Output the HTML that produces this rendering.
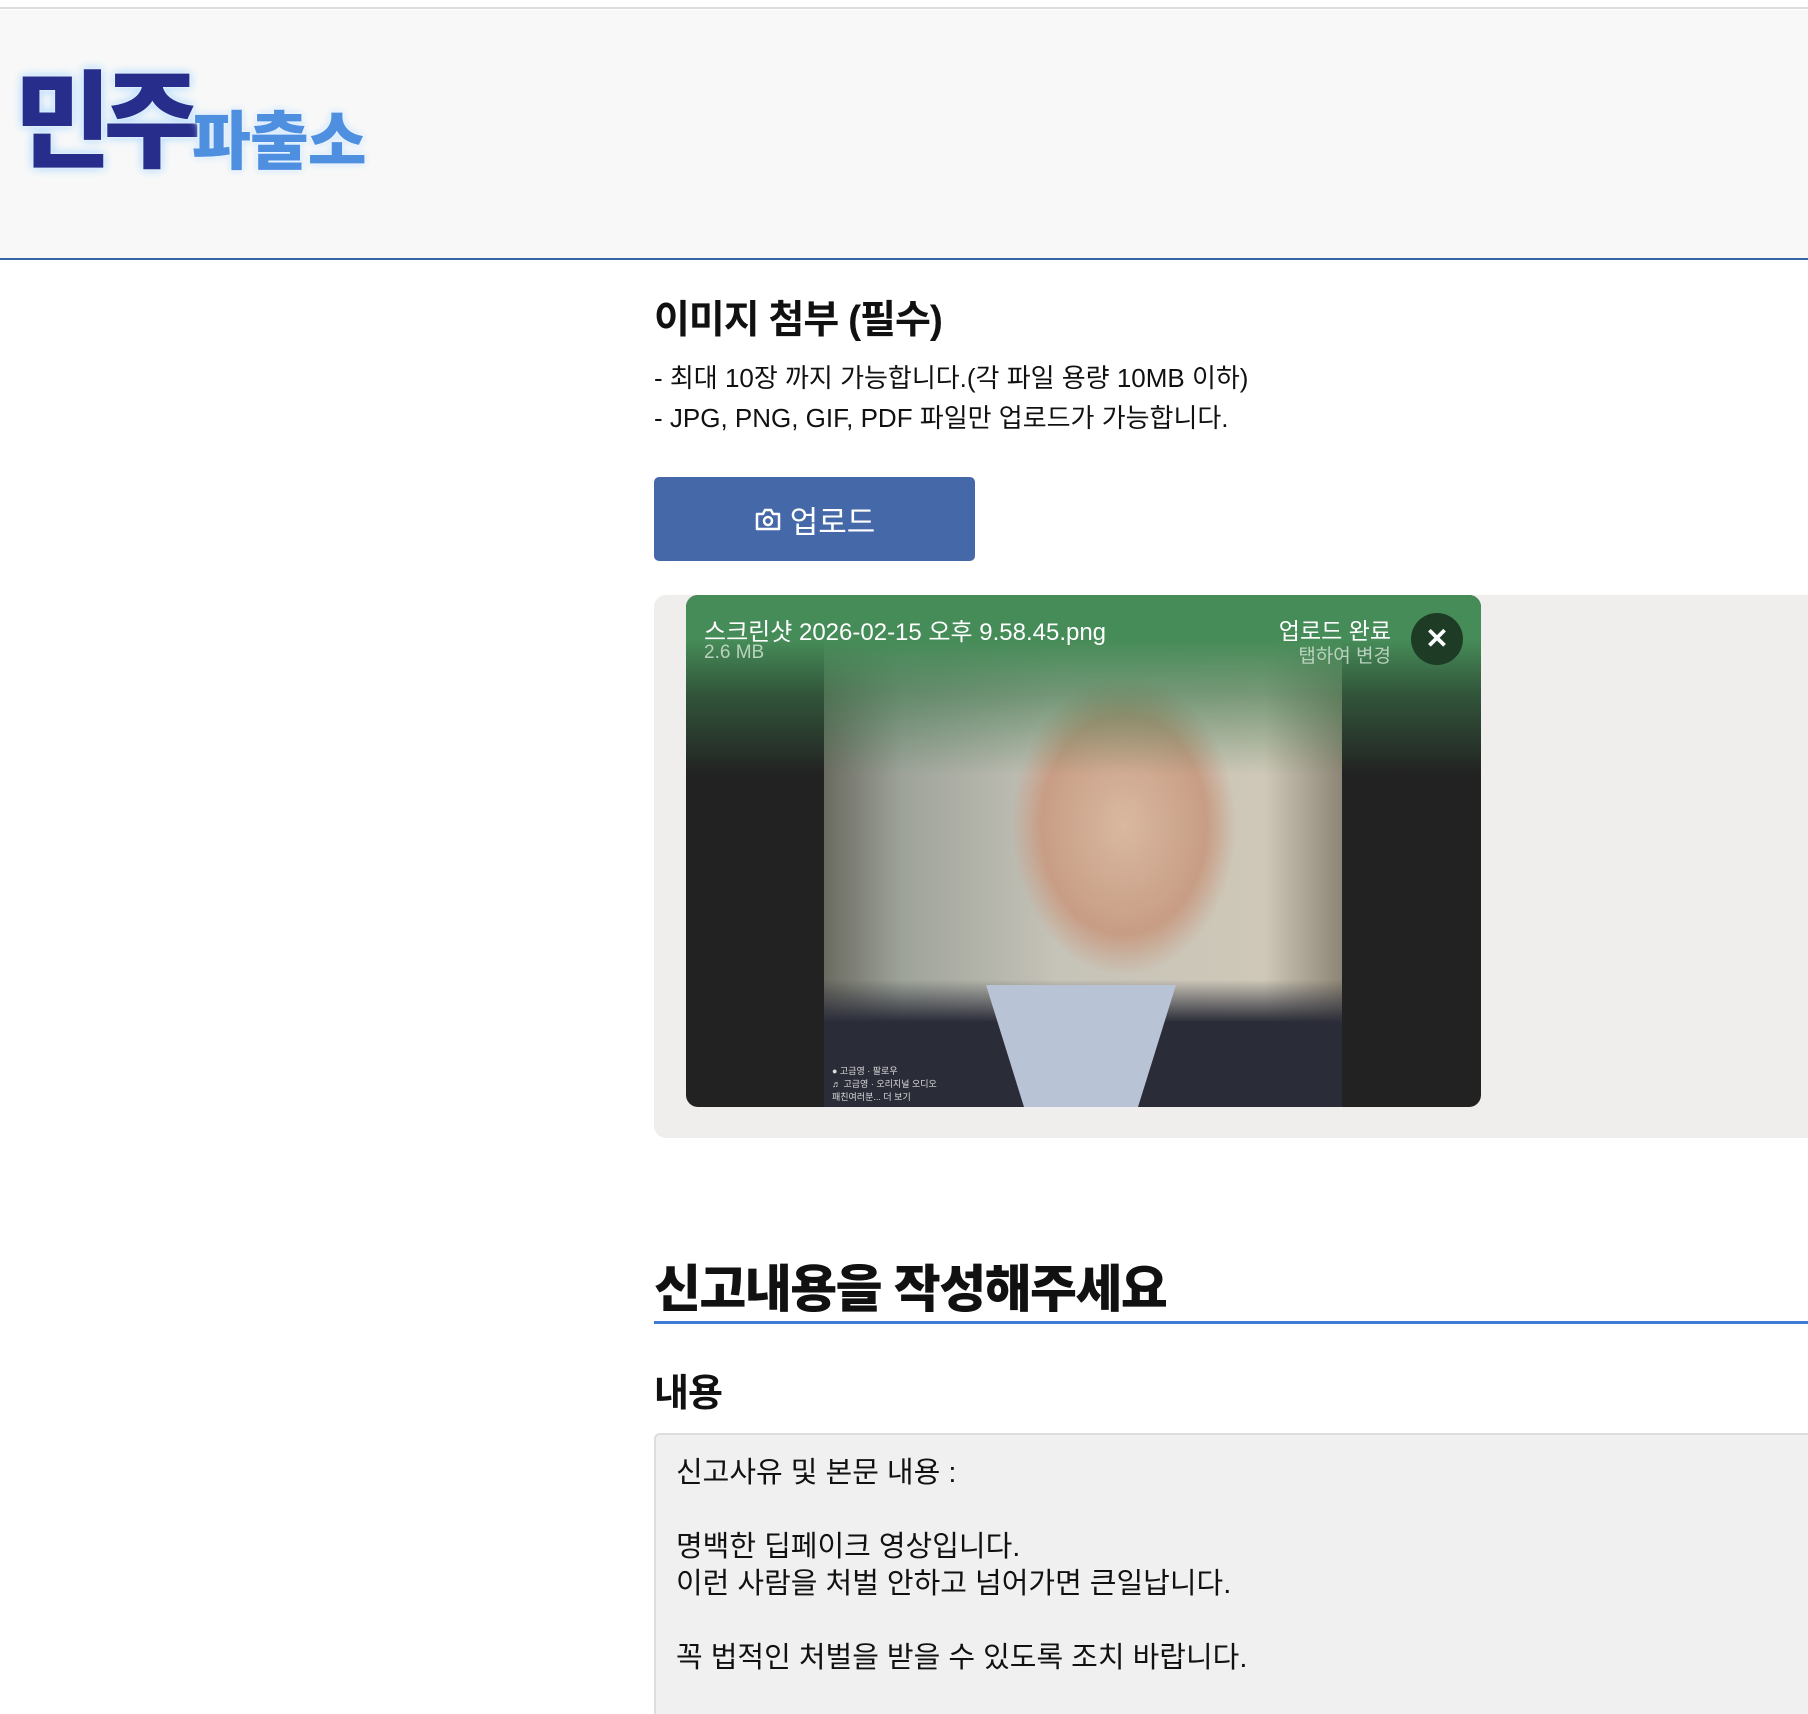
<!DOCTYPE html>
<html style="width:1808px;height:1714px;overflow:hidden"><head><meta charset="utf-8"><style>
*{box-sizing:border-box;margin:0;padding:0}
body{width:1808px;height:1714px;overflow:hidden;background:#fff;font-family:"Liberation Sans","Noto Sans CJK KR",sans-serif;color:#111;position:relative}
.abs{position:absolute}
</style></head><body>
<div class="abs" style="left:0;top:0;width:1808px;height:9px;background:#fff;border-bottom:2px solid #ddd"></div>
<div class="abs" style="left:0;top:10px;width:1808px;height:250px;background:#f8f8f8;border-bottom:2px solid #3a64a8"></div>
<div class="abs" style="left:14px;top:60px;font-size:106px;font-weight:900;color:#262d8a;letter-spacing:-8px;text-shadow:0 0 3px #fff,0 0 8px #a8d4ff,0 0 12px #c8e6ff;line-height:1.2">민주</div>
<div class="abs" style="left:192px;top:104px;font-size:64px;font-weight:900;color:#4f8fe0;letter-spacing:-1px;text-shadow:0 0 3px #fff,0 0 8px #b8dcff;line-height:1.2">파출소</div>

<div class="abs" style="left:654px;top:289px;font-size:39px;font-weight:bold;letter-spacing:-1px">이미지 첨부 (필수)</div>
<div class="abs" style="left:654px;top:358px;font-size:26px;letter-spacing:0;line-height:40px">- 최대 10장 까지 가능합니다.(각 파일 용량 10MB 이하)<br>- JPG, PNG, GIF, PDF 파일만 업로드가 가능합니다.</div>
<div class="abs" style="left:654px;top:477px;width:321px;height:84px;background:#4569a8;border-radius:5px;color:#fff;font-size:31px;display:flex;align-items:center;justify-content:center;gap:8px">
<svg width="28" height="26" viewBox="0 0 28 26"><path d="M3 8h6l2-4h6l2 4h6v15H3z" fill="none" stroke="#fff" stroke-width="2.5" stroke-linejoin="round"/><circle cx="14" cy="15" r="4" fill="none" stroke="#fff" stroke-width="2.5"/></svg>업로드</div>

<div class="abs" style="left:654px;top:595px;width:1154px;height:543px;background:#efeeec;border-radius:12px 0 0 12px"></div>
<div class="abs" style="left:686px;top:595px;width:795px;height:512px;background:#222;border-radius:12px;overflow:hidden">
  <div class="abs" style="left:138px;top:0;width:518px;height:512px;background:radial-gradient(ellipse 150px 200px at 300px 230px,#d9b8a0 0%,#c89d85 55%,transparent 75%),linear-gradient(90deg,#6a6a60 0%,#9ea39a 15%,#c6c3b8 45%,#cfc8b8 85%,#8d8575 100%)"></div>
  <div class="abs" style="left:138px;top:300px;width:518px;height:212px;background:linear-gradient(180deg,transparent 0%,transparent 40%,#2a2c38 60%)"></div>
  <div class="abs" style="left:300px;top:390px;width:190px;height:122px;background:#b8c3d6;clip-path:polygon(0 0,100% 0,80% 100%,20% 100%)"></div>
  <div class="abs" style="left:0;top:0;width:795px;height:180px;background:linear-gradient(180deg,#468c58 0%,#468c58 25%,rgba(60,120,75,.6) 55%,rgba(34,34,34,0) 100%)"></div>
  <div class="abs" style="left:18px;top:17px;color:#fff;font-size:24px">스크린샷 2026-02-15 오후 9.58.45.png</div>
  <div class="abs" style="left:18px;top:47px;color:#b9d2bd;font-size:19px">2.6 MB</div>
  <div class="abs" style="right:90px;top:17px;color:#fff;font-size:23px;text-align:right">업로드 완료</div>
  <div class="abs" style="right:90px;top:46px;color:#b9d2bd;font-size:19px;text-align:right">탭하여 변경</div>
  <div class="abs" style="left:725px;top:18px;width:52px;height:52px;border-radius:50%;background:#1d3b25;color:#fff;font-size:28px;font-weight:bold;text-align:center;line-height:52px">✕</div>
  <div class="abs" style="left:146px;top:470px;color:#ddd;font-size:9px;line-height:13px">● 고금영 · 팔로우<br>♬ 고금영 · 오리지널 오디오<br>패친여러분... 더 보기</div>
</div>

<div class="abs" style="left:654px;top:1248px;font-size:51px;font-weight:900;letter-spacing:-1.5px">신고내용을 작성해주세요</div>
<div class="abs" style="left:654px;top:1321px;width:1154px;height:3px;background:#3d7bd6"></div>
<div class="abs" style="left:654px;top:1362px;font-size:38px;font-weight:bold;letter-spacing:-1px">내용</div>
<div class="abs" style="left:654px;top:1433px;width:1154px;height:281px;background:#f0f0f0;border:2px solid #ddd;border-right:none;border-bottom:none;border-radius:6px 0 0 0"></div>
<div class="abs" style="left:676px;top:1455px;font-size:29px;letter-spacing:0;line-height:37px">신고사유 및 본문 내용 :<br><br>명백한 딥페이크 영상입니다.<br>이런 사람을 처벌 안하고 넘어가면 큰일납니다.<br><br>꼭 법적인 처벌을 받을 수 있도록 조치 바랍니다.</div>
</body></html>
